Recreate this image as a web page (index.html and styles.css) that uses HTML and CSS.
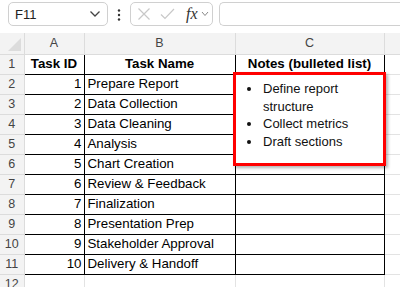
FILE: index.html
```html
<!DOCTYPE html>
<html lang="en">
    <head>
        <meta charset="UTF-8">
        <meta name="viewport" content="width=device-width, initial-scale=1.0">
        <title>Task Sheet</title>
        <link rel="stylesheet" href="styles.css">
    </head>
    <body>
        <div class="toolbar">
            <div class="namebox">
                <span>F11</span>
                <svg class="chevron" width="12" height="8" viewBox="0 0 12 8"><path d="M1.5 1.5 L6 6 L10.5 1.5" fill="none" stroke="#444" stroke-width="1.3"/></svg>
            </div>
            <div class="more">
                <svg width="4" height="14" viewBox="0 0 4 14"><circle cx="2" cy="2.5" r="1.2" fill="#333"/><circle cx="2" cy="7" r="1.2" fill="#333"/><circle cx="2" cy="11.5" r="1.2" fill="#333"/></svg>
            </div>
            <div class="fxgroup">
                <svg width="14" height="14" viewBox="0 0 14 14"><path d="M1.5 1.5 L12.5 12.5 M12.5 1.5 L1.5 12.5" stroke="#c8c8c8" stroke-width="1.2" fill="none"/></svg>
                <svg width="15" height="12" viewBox="0 0 15 12"><path d="M1 6.5 L5 10.5 L14 1" stroke="#c8c8c8" stroke-width="1.2" fill="none"/></svg>
                <span class="fx">fx</span>
                <svg class="mini" width="8" height="6" viewBox="0 0 8 6"><path d="M1 1 L4 4.5 L7 1" fill="none" stroke="#888" stroke-width="1"/></svg>
            </div>
            <div class="formula"></div>
        </div>

        <div class="sheet">
            <table class="grid">
                <colgroup>
                    <col class="c-head">
                    <col class="c-a">
                    <col class="c-b">
                    <col class="c-c">
                    <col class="c-d">
                </colgroup>
                <thead>
                    <tr>
                        <th class="corner"><span class="tri"></span></th>
                        <th>A</th>
                        <th>B</th>
                        <th>C</th>
                        <th></th>
                    </tr>
                </thead>
                <tbody id="rows"></tbody>
            </table>

            <div class="note-box">
                <ul>
                    <li>Define report structure</li>
                    <li>Collect metrics</li>
                    <li>Draft sections</li>
                </ul>
            </div>
        </div>

        <script>
            const tasks = [
                'Prepare Report', 'Data Collection', 'Data Cleaning', 'Analysis',
                'Chart Creation', 'Review & Feedback', 'Finalization',
                'Presentation Prep', 'Stakeholder Approval', 'Delivery & Handoff'
            ];

            const body = document.getElementById('rows');

            function addRow(num, cells, cls) {
                const tr = document.createElement('tr');
                const th = document.createElement('th');
                th.className = 'rowhead';
                th.textContent = num;
                tr.appendChild(th);
                cells.forEach((text, i) => {
                    const td = document.createElement('td');
                    td.textContent = text;
                    if (cls[i]) td.className = cls[i];
                    tr.appendChild(td);
                });
                body.appendChild(tr);
            }

            addRow(1, ['Task ID', 'Task Name', 'Notes (bulleted list)', ''], ['cell title', 'cell title', 'cell title', '']);
            tasks.forEach((name, i) => {
                addRow(i + 2, [String(i + 1), name, '', ''], ['cell num', 'cell', 'cell', '']);
            });
            addRow(12, ['', '', '', ''], ['', '', '', '']);
        </script>
    </body>
</html>
```

FILE: styles.css
```css
body {
    margin: 0;
    background: #fff;
    font-family: "Liberation Sans", Arial, sans-serif;
    overflow: hidden;
    width: 400px;
    height: 287px;
}

.toolbar {
    display: flex;
    align-items: center;
    height: 24px;
    padding: 2px 0 0 8px;
}

.namebox {
    box-sizing: border-box;
    width: 100px;
    height: 24px;
    border: 1px solid #d0d0d0;
    border-radius: 5px;
    display: flex;
    align-items: center;
    justify-content: space-between;
    padding: 0 6px 0 6px;
    font-size: 13px;
    color: #222;
}

.more {
    width: 22px;
    display: flex;
    justify-content: center;
    padding-top: 2px;
}

.fxgroup {
    box-sizing: border-box;
    width: 83px;
    height: 24px;
    border: 1px solid #d0d0d0;
    border-radius: 5px;
    display: flex;
    align-items: center;
    gap: 9px;
    padding-left: 6px;
}

.fxgroup .fx {
    font-family: "Liberation Serif", serif;
    font-style: italic;
    font-size: 16px;
    color: #333;
    margin-left: 2px;
    margin-right: -6px;
}

.formula {
    box-sizing: border-box;
    flex: 1;
    height: 24px;
    margin-left: 6px;
    border: 1px solid #d0d0d0;
    border-right: none;
    border-radius: 5px 0 0 5px;
}

.sheet {
    position: relative;
    margin-top: 7px;
}

.grid {
    border-collapse: collapse;
    table-layout: fixed;
    width: 460px;
}

.c-head { width: 24px; }
.c-a { width: 60px; }
.c-b { width: 151px; }
.c-c { width: 149px; }
.c-d { width: 76px; }

.grid tr {
    height: 20px;
}

.grid thead tr {
    height: 21px;
}

.grid th {
    background: #f3f3f3;
    border: 1px solid #dcdcdc;
    font-weight: normal;
    font-size: 12.5px;
    color: #444;
    padding: 0;
    line-height: 18px;
}

.grid thead th {
    border-top: none;
}

.grid th.corner {
    position: relative;
    border-left: none;
}

.tri {
    position: absolute;
    right: 3px;
    bottom: 3px;
    width: 0;
    height: 0;
    border-left: 13px solid transparent;
    border-bottom: 13px solid #dcdcdc;
}

.grid th.rowhead {
    border-left: none;
    text-align: center;
}

.grid td {
    border: 1px solid #e3e3e3;
    padding: 0 3px;
    font-size: 13.3px;
    line-height: 18px;
    color: #000;
    white-space: nowrap;
    overflow: hidden;
}

.grid td.cell {
    border: 1px solid #000;
}

.grid td.title {
    font-weight: bold;
    text-align: center;
    border-top-color: #dcdcdc;
}

.grid td.num {
    text-align: right;
    padding-right: 2px;
}

.note-box {
    position: absolute;
    left: 233px;
    top: 39px;
    box-sizing: border-box;
    width: 153px;
    height: 94px;
    border: 3px solid #f00;
    background: #fff;
    box-shadow: 2px 2px 3px rgba(0, 0, 0, 0.3);
}

.note-box ul {
    margin: 0;
    padding: 5px 0 0 26px;
    font-size: 13px;
    line-height: 17.5px;
    color: #111;
}

.note-box li {
    padding-left: 1px;
}
```
